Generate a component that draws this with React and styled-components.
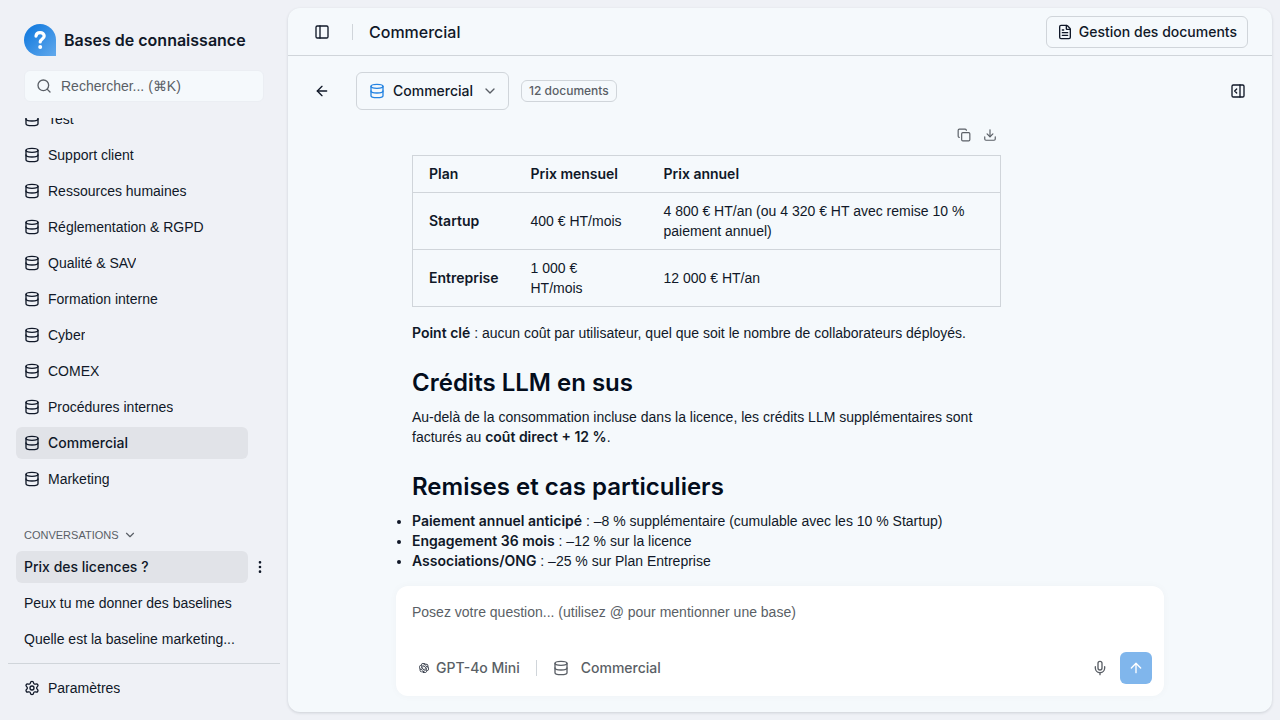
import React from "react";
import styled, { createGlobalStyle, css } from "styled-components";
import {
  ArrowLeft,
  ArrowUp,
  ChevronDown,
  Copy,
  Database,
  Download,
  EllipsisVertical,
  FileText,
  Mic,
  PanelLeft,
  PanelRightOpen,
  Search,
  Settings
} from "lucide-react";
import { SiOpenai } from "react-icons/si";

const colors = {
  page: "#eff1f6",
  panel: "#f5f9fc",
  active: "#e1e3e8",
  border: "#d0d5da",
  text: "#101828",
  heading: "#030d1c",
  muted: "#5a5f66",
  blue: "#2383e2",
  send: "#80b6ec",
  white: "#ffffff"
};

const medium = css`
  font-family: "Inter", sans-serif;
  font-weight: 500;
`;

const semibold = css`
  font-family: "Inter", sans-serif;
  font-weight: 600;
`;

const GlobalStyle = createGlobalStyle`
  * {
    box-sizing: border-box;
  }
  body {
    margin: 0;
    background: ${colors.page};
    color: ${colors.text};
    font-family: "Liberation Sans", sans-serif;
    font-size: 14px;
    line-height: 20px;
  }
  button, input, select, textarea {
    margin: 0;
    padding: 0;
    border: 0;
    background: none;
    color: inherit;
    font: inherit;
    outline: none;
  }
  svg {
    flex-shrink: 0;
  }
`;

const Layout = styled.div`
  display: flex;
  height: 100vh;
`;

const Sidebar = styled.aside`
  display: flex;
  flex-direction: column;
  flex: 0 0 288px;
  min-width: 0;
  padding: 8px;
`;

const Brand = styled.div`
  display: flex;
  align-items: center;
  gap: 8px;
  padding: 16px 16px 14px;
  font-size: 16px;
  ${semibold}
`;

const SearchBox = styled.label`
  display: flex;
  align-items: center;
  gap: 9px;
  height: 32px;
  margin: 0 16px;
  padding: 0 11px;
  border: 1px solid #ebeef3;
  border-radius: 6px;
  background: ${colors.panel};
  color: ${colors.muted};
  input {
    flex: 1;
    min-width: 0;
  }
  input::placeholder {
    color: ${colors.muted};
    opacity: 1;
  }
`;

/* column-reverse keeps the list scrolled to its end */
const SideScroll = styled.div`
  display: flex;
  flex-direction: column-reverse;
  flex: 1;
  min-height: 0;
  margin: 16px 8px 0 0;
  overflow-y: auto;
  scrollbar-width: none;
`;

const SideContent = styled.nav`
  flex-shrink: 0;
  padding: 0 0 8px 8px;
`;

const List = styled.ul`
  display: flex;
  flex-direction: column;
  gap: 4px;
  margin: 0;
  padding: 0;
  list-style: none;
`;

const Row = styled.li`
  display: flex;
  align-items: center;
`;

const Item = styled.button`
  display: flex;
  align-items: center;
  gap: 8px;
  width: 232px;
  height: 32px;
  padding: 0 8px;
  border-radius: 6px;
  background: ${props => (props.$active ? colors.active : "none")};
  text-align: left;
  ${props => props.$active && medium}
  span {
    overflow: hidden;
    white-space: nowrap;
    text-overflow: ellipsis;
  }
`;

const GroupLabel = styled.button`
  display: flex;
  align-items: center;
  gap: 4px;
  height: 32px;
  margin-top: 24px;
  padding: 0 8px;
  color: ${colors.muted};
  font-size: 11px;
  text-transform: uppercase;
`;

const SideFooter = styled.div`
  padding: 8px;
  border-top: 1px solid ${colors.border};
`;

const IconButton = styled.button`
  display: flex;
  align-items: center;
  justify-content: center;
  flex-shrink: 0;
  width: ${props => props.$size}px;
  height: ${props => props.$size}px;
  color: ${props => (props.$muted ? colors.muted : colors.text)};
`;

const Panel = styled.main`
  display: flex;
  flex-direction: column;
  flex: 1;
  min-width: 0;
  margin: 8px 8px 8px 0;
  border-radius: 12px;
  background: ${colors.panel};
  box-shadow: 0 1px 3px rgba(16, 24, 40, 0.15);
`;

const Header = styled.header`
  display: flex;
  align-items: center;
  gap: 16px;
  height: 48px;
  padding: 0 24px 0 20px;
  border-bottom: 1px solid ${colors.border};
`;

const Title = styled.h1`
  flex: 1;
  margin: 0;
  font-size: 16px;
  ${medium}
`;

const Divider = styled.span`
  width: 1px;
  height: 16px;
  background: ${colors.border};
`;

const OutlineButton = styled.button`
  display: flex;
  align-items: center;
  gap: 6px;
  height: 32px;
  padding: 0 10px;
  border: 1px solid ${colors.border};
  border-radius: 6px;
  ${medium}
`;

const Toolbar = styled.div`
  display: flex;
  align-items: center;
  padding: 16px 16px 14px;
`;

const BaseSelect = styled.label`
  display: flex;
  align-items: center;
  gap: 8px;
  height: 38px;
  margin: 0 12px 0 16px;
  padding: 0 10px 0 12px;
  border: 1px solid ${colors.border};
  border-radius: 6px;
  ${medium}
  select {
    appearance: none;
  }
`;

const Badge = styled.span`
  margin-right: auto;
  padding: 0 7px;
  border: 1px solid ${colors.border};
  border-radius: 6px;
  color: ${colors.muted};
  font-size: 12px;
  ${medium}
`;

const Column = styled.div`
  width: 100%;
  max-width: 768px;
  margin: 0 auto;
`;

const Thread = styled.div`
  flex: 1;
  min-height: 0;
  overflow-y: auto;
  scrollbar-width: none;
`;

const AnswerPad = styled(Column)`
  padding: 0 16px 8px;
`;

const Answer = styled.article`
  width: 80%;
  p {
    margin: 16px 0 0;
  }
  h2 {
    margin: 24px 0 8px;
    color: ${colors.heading};
    font-size: 24px;
    line-height: 32px;
    ${semibold}
  }
  h2 + p {
    margin: 0;
  }
  ul {
    margin: 0;
    padding: 0;
  }
  strong {
    ${semibold}
  }
`;

const AnswerActions = styled.div`
  display: flex;
  justify-content: flex-end;
  gap: 4px;
  margin-bottom: 9px;
`;

const PriceTable = styled.table`
  width: 100%;
  border: 1px solid ${colors.border};
  border-collapse: collapse;
  table-layout: fixed;
  th,
  td {
    padding: 8px 16px;
    border-bottom: 1px solid ${colors.border};
    text-align: left;
  }
  th {
    ${semibold}
  }
`;

const PriceCol = styled.col`
  width: ${props => props.$width};
`;

const ComposerWrap = styled(Column)`
  padding-bottom: 16px;
`;

const Composer = styled.form`
  display: flex;
  flex-direction: column;
  padding: 12px;
  border-radius: 12px;
  background: ${colors.white};
  box-shadow: 0 0 8px rgba(16, 24, 40, 0.03);
  textarea {
    display: block;
    height: 54px;
    padding: 4px;
    resize: none;
  }
  textarea::placeholder {
    color: ${colors.muted};
    opacity: 1;
  }
`;

const ComposerBar = styled.div`
  display: flex;
  align-items: center;
  gap: 8px;
  color: ${colors.muted};
`;

const ComposerOption = styled.button`
  display: flex;
  align-items: center;
  gap: ${props => props.$gap}px;
  height: 32px;
  padding: 0 8px;
  ${medium}
`;

const ModelIcon = styled.span`
  display: flex;
  justify-content: center;
  width: 16px;
  color: ${colors.text};
`;

const ComposerEnd = styled.div`
  display: flex;
  gap: 4px;
  margin-left: auto;
`;

const SendButton = styled(IconButton)`
  border-radius: 6px;
  background: ${colors.send};
  color: ${colors.white};
`;

const bases = [
  "Test",
  "Support client",
  "Ressources humaines",
  "Réglementation & RGPD",
  "Qualité & SAV",
  "Formation interne",
  "Cyber",
  "COMEX",
  "Procédures internes",
  "Commercial",
  "Marketing"
];

const conversations = [
  "Prix des licences ?",
  "Peux tu me donner des baselines",
  "Quelle est la baseline marketing..."
];

const plans = [
  {
    name: "Startup",
    monthly: "400 € HT/mois",
    yearly: "4 800 € HT/an (ou 4 320 € HT avec remise 10 % paiement annuel)"
  },
  { name: "Entreprise", monthly: "1 000 € HT/mois", yearly: "12 000 € HT/an" }
];

const discounts = [
  ["Paiement annuel anticipé", "–8 % supplémentaire (cumulable avec les 10 % Startup)"],
  ["Engagement 36 mois", "–12 % sur la licence"],
  ["Associations/ONG", "–25 % sur Plan Entreprise"]
];

const Logo = () => (
  <svg width="32" height="32" viewBox="0 0 32 32" aria-hidden="true">
    <defs>
      <linearGradient id="logo" x1="0" y1="0" x2="1" y2="1">
        <stop offset="0.2" stopColor="#1b7fe0" />
        <stop offset="1" stopColor="#62a9ec" />
      </linearGradient>
    </defs>
    <path d="M16 0a16 16 0 0 1 16 16v16H16a16 16 0 0 1 0-32z" fill="url(#logo)" />
    <path
      d="M12 12.200c.2-2.300 1.800-3.600 4.100-3.600s4.100 1.300 4.100 3.400c0 3-4 2.900-4 6"
      fill="none"
      stroke="#fff"
      strokeWidth="3.200"
      strokeLinecap="round"
    />
    <circle cx="16.200" cy="23" r="2" fill="#fff" />
  </svg>
);

const AppSidebar = () => (
  <Sidebar>
    <Brand>
      <Logo />
      Bases de connaissance
    </Brand>
    <SearchBox>
      <Search size={16} />
      <input type="search" aria-label="Rechercher" placeholder="Rechercher... (⌘K)" />
    </SearchBox>
    <SideScroll>
      <SideContent>
        <List>
          {bases.map(name => (
            <Row key={name}>
              <Item $active={name === "Commercial"}>
                <Database size={16} />
                <span>{name}</span>
              </Item>
            </Row>
          ))}
        </List>
        <GroupLabel>
          Conversations <ChevronDown size={14} />
        </GroupLabel>
        <List>
          {conversations.map((name, i) => (
            <Row key={name}>
              <Item $active={i === 0}>
                <span>{name}</span>
              </Item>
              {i === 0 && (
                <IconButton $size={24} aria-label="Options">
                  <EllipsisVertical size={16} />
                </IconButton>
              )}
            </Row>
          ))}
        </List>
      </SideContent>
    </SideScroll>
    <SideFooter>
      <Item>
        <Settings size={16} />
        <span>Paramètres</span>
      </Item>
    </SideFooter>
  </Sidebar>
);

const PricingAnswer = () => (
  <Answer>
    <AnswerActions>
      <IconButton $size={22} $muted aria-label="Copier">
        <Copy size={14} />
      </IconButton>
      <IconButton $size={22} $muted aria-label="Télécharger">
        <Download size={14} />
      </IconButton>
    </AnswerActions>
    <PriceTable>
      <colgroup>
        <PriceCol $width="102px" />
        <PriceCol $width="133px" />
        <PriceCol $width="auto" />
      </colgroup>
      <thead>
        <tr>
          <th>Plan</th>
          <th>Prix mensuel</th>
          <th>Prix annuel</th>
        </tr>
      </thead>
      <tbody>
        {plans.map(plan => (
          <tr key={plan.name}>
            <th scope="row">{plan.name}</th>
            <td>{plan.monthly}</td>
            <td>{plan.yearly}</td>
          </tr>
        ))}
      </tbody>
    </PriceTable>
    <p>
      <strong>Point clé</strong> : aucun coût par utilisateur, quel que soit le
      nombre de collaborateurs déployés.
    </p>
    <h2>Crédits LLM en sus</h2>
    <p>
      Au-delà de la consommation incluse dans la licence, les crédits LLM
      supplémentaires sont facturés au <strong>coût direct + 12 %</strong>.
    </p>
    <h2>Remises et cas particuliers</h2>
    <ul>
      {discounts.map(([label, text]) => (
        <li key={label}>
          <strong>{label}</strong> : {text}
        </li>
      ))}
    </ul>
  </Answer>
);

const App = () => (
  <Layout>
    <GlobalStyle />
    <AppSidebar />
    <Panel>
      <Header>
        <IconButton $size={28} aria-label="Menu">
          <PanelLeft size={16} />
        </IconButton>
        <Divider />
        <Title>Commercial</Title>
        <OutlineButton>
          <FileText size={16} />
          Gestion des documents
        </OutlineButton>
      </Header>
      <Toolbar>
        <IconButton $size={36} aria-label="Retour">
          <ArrowLeft size={16} />
        </IconButton>
        <BaseSelect>
          <Database size={16} color={colors.blue} />
          <select aria-label="Base de connaissance">
            <option>Commercial</option>
          </select>
          <ChevronDown size={16} color={colors.muted} />
        </BaseSelect>
        <Badge>12 documents</Badge>
        <IconButton $size={36} aria-label="Ouvrir le panneau">
          <PanelRightOpen size={16} />
        </IconButton>
      </Toolbar>
      <Thread>
        <AnswerPad>
          <PricingAnswer />
        </AnswerPad>
      </Thread>
      <ComposerWrap>
        <Composer>
          <textarea
            aria-label="Votre question"
            placeholder="Posez votre question... (utilisez @ pour mentionner une base)"
          />
          <ComposerBar>
            <ComposerOption type="button" $gap={4}>
              <ModelIcon>
                <SiOpenai size={10} />
              </ModelIcon>
              GPT-4o Mini
            </ComposerOption>
            <Divider />
            <ComposerOption type="button" $gap={12}>
              <Database size={16} />
              Commercial
            </ComposerOption>
            <ComposerEnd>
              <IconButton type="button" $size={32} $muted aria-label="Dicter">
                <Mic size={16} />
              </IconButton>
              <SendButton $size={32} aria-label="Envoyer">
                <ArrowUp size={16} />
              </SendButton>
            </ComposerEnd>
          </ComposerBar>
        </Composer>
      </ComposerWrap>
    </Panel>
  </Layout>
);

export default App;
